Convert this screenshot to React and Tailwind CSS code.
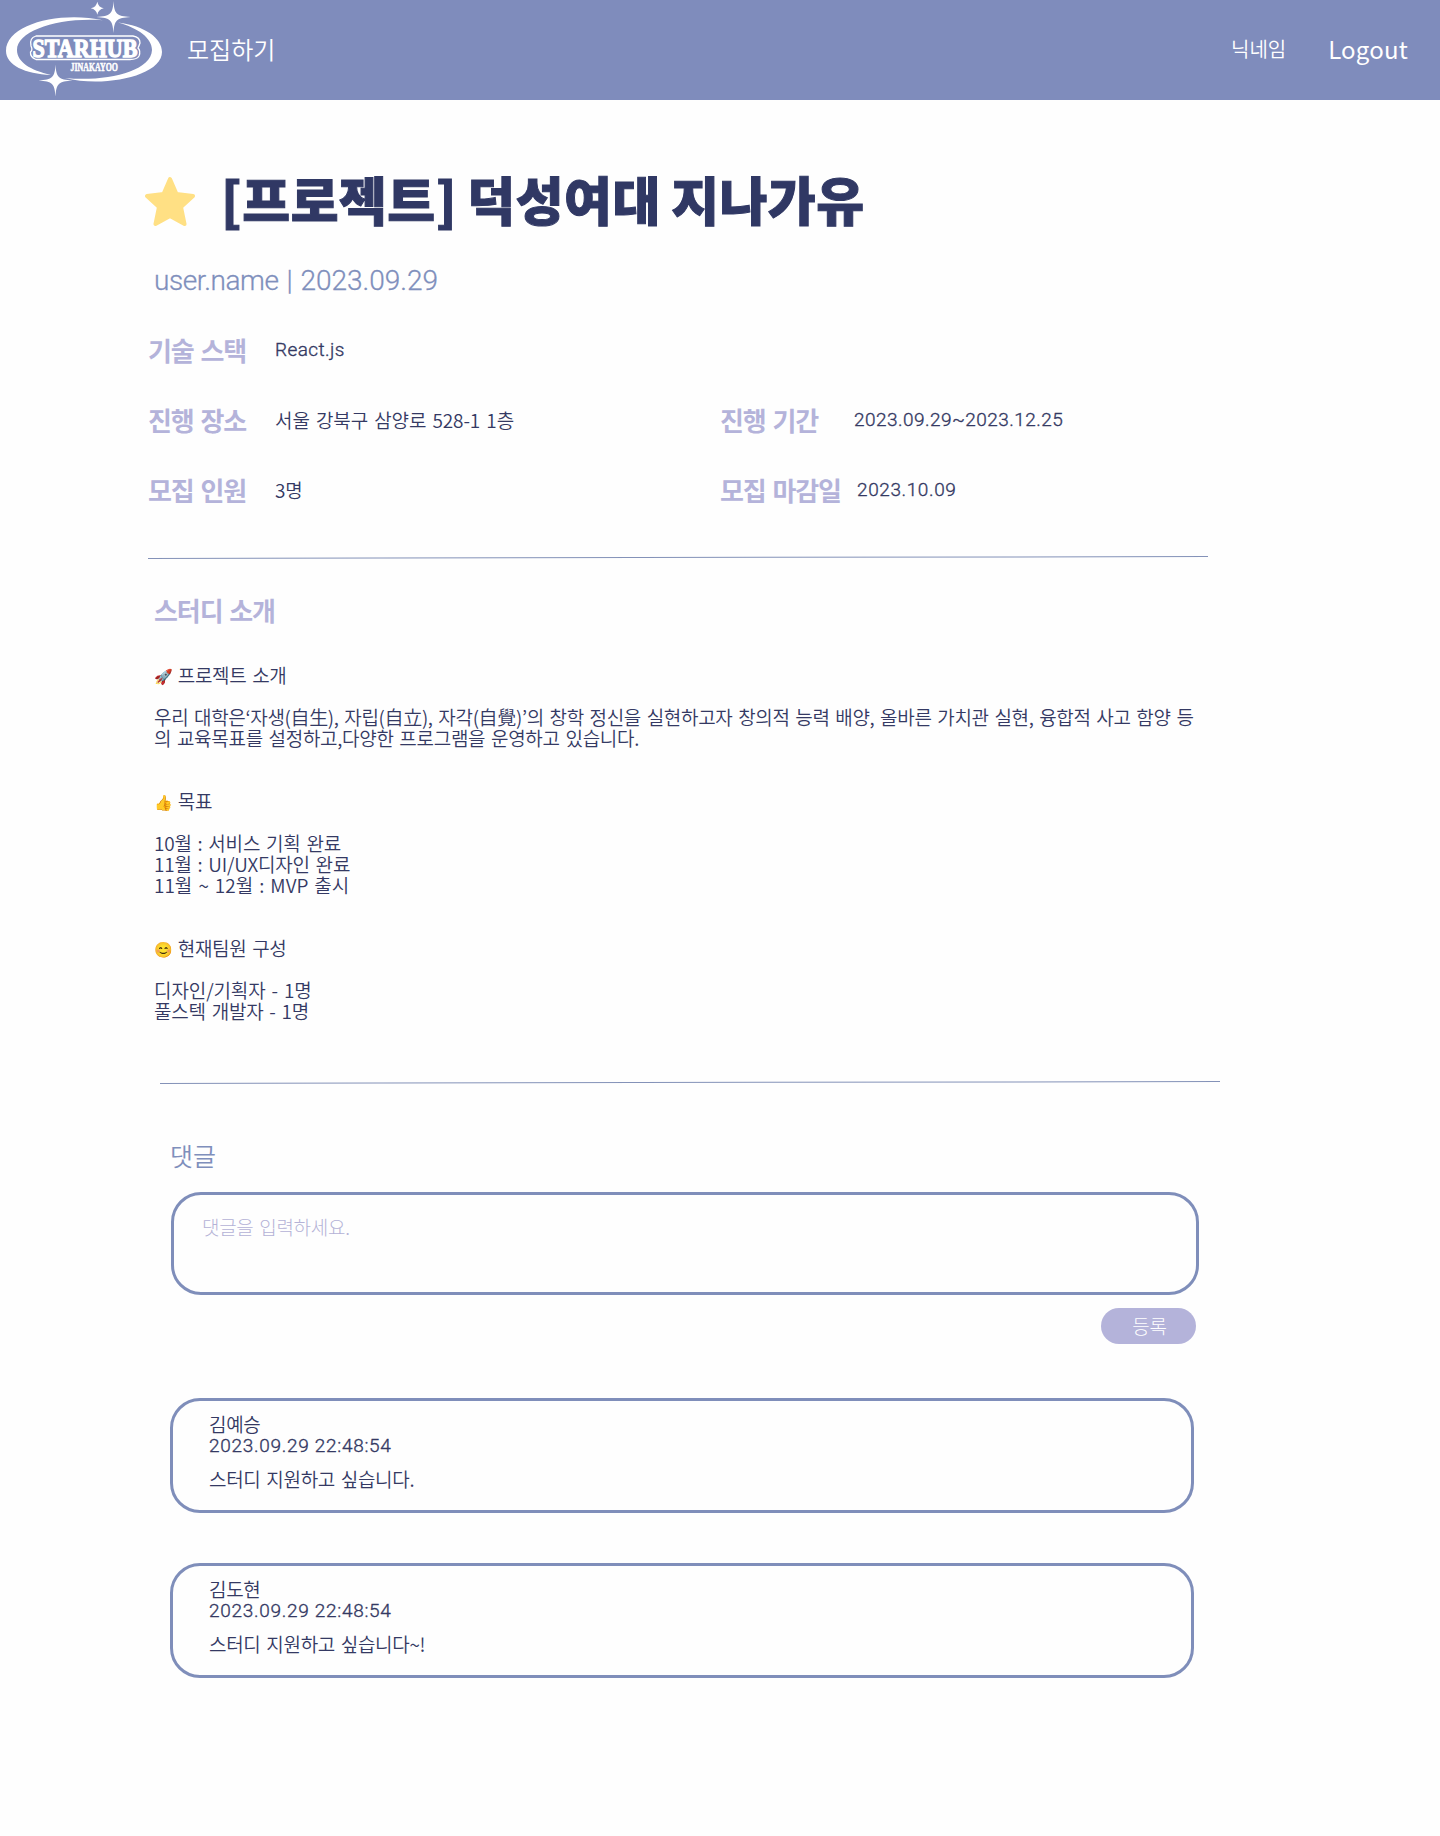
const SPARK = "M0 -16 C0.8 -3 3 -1 17 0 C3 1 0.8 3 0 16 C-0.8 3 -3 1 -17 0 C-3 -1 -0.8 -3 0 -16Z";
const SMALL_SPARK = "M0 -6.500Q1 -1 6.500 0Q1 1 0 6.500Q-1 1 -6.500 0Q-1 -1 0 -6.500Z";

function Logo() {
  return (
    <svg width="168" height="100" viewBox="0 0 168 100" className="shrink-0" fill="#fff">
      <path d="M103 20.3C60 11 6 24 6 51C6 65 25 74 51 75C30 70 17 62 17 50C17 31 58 17 103 20.3Z" />
      <path d="M118 22.5C145 26 162 38 162 52C162 76 104 88 65 78C105 82 151 72 152 50C152 38 138 28 118 22.5Z" />
      <path d={SPARK} transform="translate(113.5 17)" />
      <path d={SMALL_SPARK} transform="translate(97.3 8.3)" />
      <path d={SPARK} transform="translate(55.5 80.5)" />
      <path d="M36 36H133Q140 37 140 43Q139 46 138 48Q141 51 139 56Q137 59.5 130 59.5H36Q30 57 30.5 52Q33 50 31 46Q29 38 36 36Z" fill="none" stroke="#fff" strokeWidth="1.3" />
      <text x="32.5" y="57" textLength="105" lengthAdjust="spacingAndGlyphs" fontSize="26" strokeWidth="1.3" stroke="#fff" className="font-['Liberation_Serif',serif] font-bold">STARHUB</text>
      <text x="70.5" y="70.8" textLength="47.5" lengthAdjust="spacingAndGlyphs" fontSize="11.5" strokeWidth=".5" stroke="#fff" className="font-['Liberation_Serif',serif] font-bold">JINAKAYOO</text>
    </svg>
  );
}

function Divider({ className }) {
  return <div className={"h-px w-[1060px] -rotate-[0.1deg] bg-[#8492b8] " + className} />;
}

function Label({ className = "", children }) {
  return (
    <span className={"shrink-0 text-[26px] leading-[30px] font-bold tracking-[-1.1px] text-[#b4b3da] [word-spacing:2px] " + className}>
      {children}
    </span>
  );
}

function Value({ className, children }) {
  return <span className={"text-[19px] leading-[30px] " + className}>{children}</span>;
}

function LatinValue({ className, children }) {
  return (
    <span className={"font-['Roboto',sans-serif] text-[19px] leading-[30px] font-light [-webkit-text-stroke:0.35px_#343963] " + className}>
      {children}
    </span>
  );
}

function Emoji({ children }) {
  return <span className="relative -top-[1.5px] -mr-[1px] text-[15px] tracking-normal">{children}</span>;
}

function Comment({ name, time, text, className }) {
  return (
    <article className={"h-[115px] w-[1024px] rounded-[30px] border-[3px] border-[#7f8eba] pt-[12px] pl-[36px] text-[19px] leading-[21px] tracking-[-0.3px] [word-spacing:1.8px] " + className}>
      <p className="h-[22px]">{name}</p>
      <p className="h-[21px] font-['Roboto',sans-serif] font-light tracking-[0.7px] [word-spacing:0px] [-webkit-text-stroke:0.35px_#343963]">{time}</p>
      <p className="mt-[12px]">{text}</p>
    </article>
  );
}

export default function App() {
  return (
    <div className="h-[1836px] w-[1440px] overflow-hidden bg-[#fefefe] font-['Noto_Sans_CJK_KR',sans-serif] font-[350] text-[#343963]">
      <header className="flex h-[100px] items-center bg-[#7f8cbc] pr-[32px] text-white">
        <Logo />
        <a className="ml-[19px] pb-[3px] text-[24px]">모집하기</a>
        <span className="ml-auto pb-[3px] text-[20px]">닉네임</span>
        <a className="ml-[42px] pb-[3px] text-[24px] font-normal tracking-[0.2px]">Logout</a>
      </header>

      <main className="flex flex-col">
        <div className="mt-[69px] ml-[145px] flex h-[66px] items-center">
          <svg width="50" height="52" viewBox="0 0 50 52" className="shrink-0" fill="#ffe084" stroke="#ffe084" strokeWidth="4" strokeLinejoin="round">
            <path d="M25 3L31.5 18L48 20L36 31L39.5 48L25 40L10.500 48L14 31L2 20L18.500 18Z" />
          </svg>
          <h1 className="ml-[26px] pb-[6px] text-[52px] leading-[66px] font-black tracking-[0.5px] whitespace-nowrap text-[#303864] [word-spacing:-2px] [-webkit-text-stroke:1px_#303864]">
            [프로젝트] 덕성여대 지나가유
          </h1>
        </div>
        <p className="mt-[30px] ml-[154px] font-['Roboto',sans-serif] text-[28px] leading-[32px] font-light text-[#7f8fbc] [word-spacing:1px] [-webkit-text-stroke:0.3px_#7f8fbc]">
          <span className="tracking-[-0.4px]">user.name</span> | 2023.09.29
        </p>

        <dl className="mt-[38px] ml-[148px] flex flex-col gap-[40px]">
          <div className="flex h-[30px]">
            <Label className="w-[127px]">기술 스택</Label>
            <LatinValue className="tracking-[0.4px]">React.js</LatinValue>
          </div>
          <div className="flex h-[30px]">
            <Label className="w-[127px]">진행 장소</Label>
            <Value className="w-[445px] tracking-[-0.1px] [word-spacing:2px]">서울 강북구 삼양로 528-1 1층</Value>
            <Label className="w-[134px]">진행 기간</Label>
            <LatinValue className="tracking-[0.45px]">2023.09.29~2023.12.25</LatinValue>
          </div>
          <div className="flex h-[30px]">
            <Label className="w-[127px]">모집 인원</Label>
            <Value className="w-[445px] tracking-[-0.1px]">3명</Value>
            <Label className="w-[137px]">모집 마감일</Label>
            <LatinValue className="tracking-[0.6px]">2023.10.09</LatinValue>
          </div>
        </dl>

        <Divider className="mt-[52px] ml-[148px]" />

        <Label className="mt-[37px] ml-[154px]">스터디 소개</Label>
        <div className="mt-[39px] ml-[154px] h-[357px] text-[19px] leading-[21px] tracking-[-0.3px] whitespace-pre [word-spacing:1.8px]">
          <p className="h-[21px]"><Emoji>🚀</Emoji> 프로젝트 소개</p>
          <p className="mt-[21px] tracking-[-0.33px]">우리 대학은‘자생(自生), 자립(自立), 자각(自覺)’의 창학 정신을 실현하고자 창의적 능력 배양, 올바른 가치관 실현, 융합적 사고 함양 등</p>
          <p>의 교육목표를 설정하고,다양한 프로그램을 운영하고 있습니다.</p>
          <p className="mt-[42px] h-[21px]"><Emoji>👍</Emoji> 목표</p>
          <p className="mt-[21px] tracking-[-0.2px]">10월 : 서비스 기획 완료</p>
          <p className="tracking-[-0.2px]">11월 : UI/UX디자인 완료</p>
          <p className="tracking-[0px]">11월 ~ 12월 : MVP 출시</p>
          <p className="mt-[42px] h-[21px]"><Emoji>😊</Emoji> 현재팀원 구성</p>
          <p className="mt-[21px] tracking-[-0.1px]">디자인/기획자 - 1명</p>
          <p className="tracking-[-0.2px]">풀스텍 개발자 - 1명</p>
        </div>

        <Divider className="mt-[61px] ml-[160px]" />

        <h2 className="mt-[57px] ml-[170px] text-[25px] leading-[30px] text-[#7f8fbc]">댓글</h2>
        <div className="mt-[22px] ml-[171px] h-[103px] w-[1028px] rounded-[30px] border-[3px] border-[#7f8eba] pt-[21px] pl-[28px] text-[19px] leading-[21px] font-light tracking-[-0.3px] text-[#b4b2d6] [word-spacing:1.8px]">
          댓글을 입력하세요.
        </div>
        <button className="mt-[13px] ml-[1101px] h-[36px] w-[95px] rounded-full bg-[#b4b3da] pl-[2px] text-[19px] leading-[36px] font-light tracking-[-0.3px] text-white">
          등록
        </button>
        <Comment className="mt-[54px] ml-[170px]" name="김예승" time="2023.09.29 22:48:54" text="스터디 지원하고 싶습니다." />
        <Comment className="mt-[50px] ml-[170px]" name="김도현" time="2023.09.29 22:48:54" text="스터디 지원하고 싶습니다~!" />
      </main>
    </div>
  );
}
